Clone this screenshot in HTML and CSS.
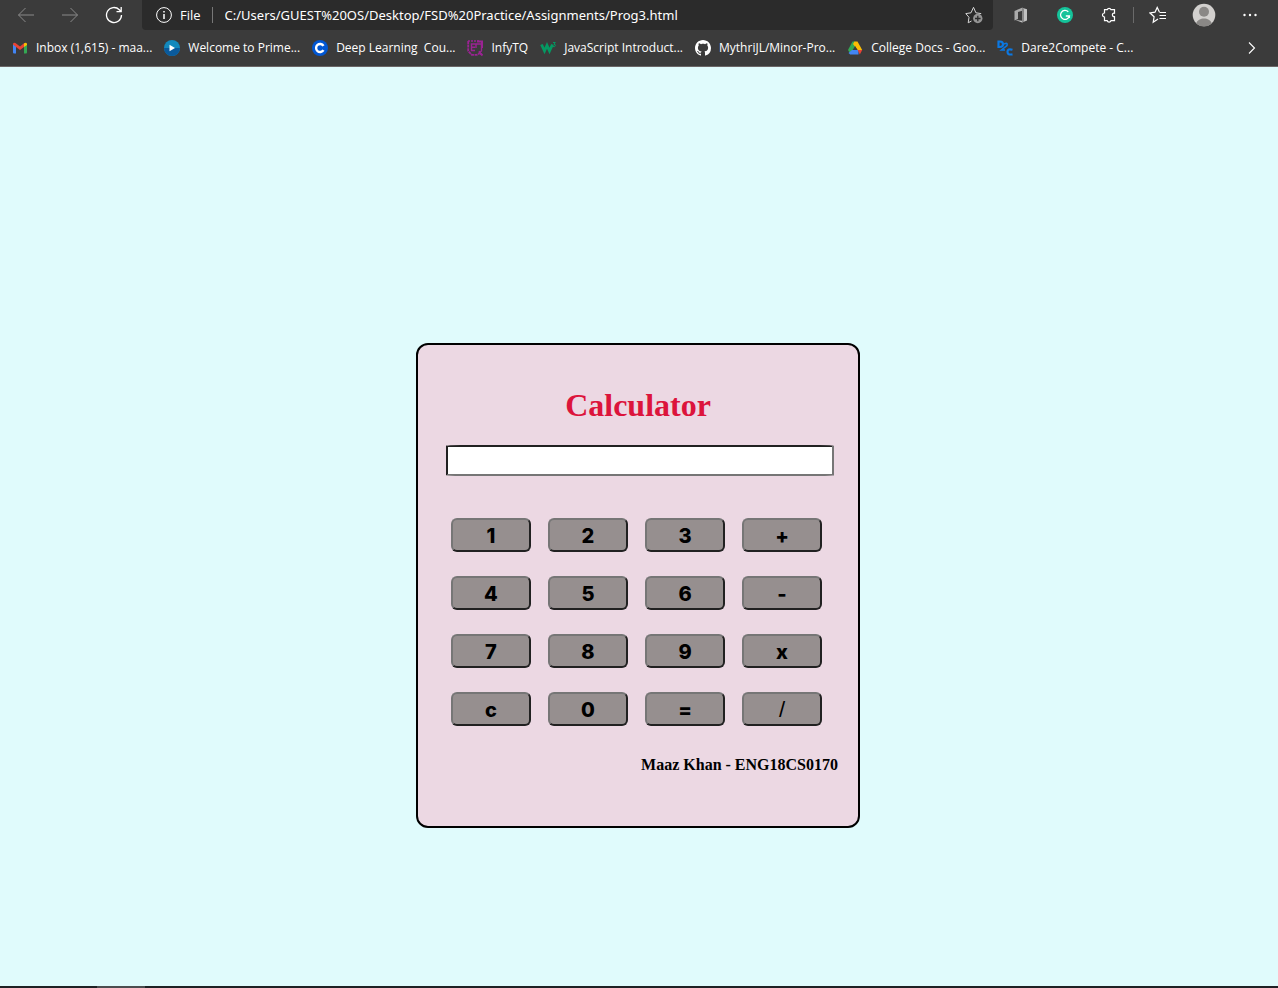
FILE: index.html
```html
<!DOCTYPE html>
<html lang="en">
<head>
<meta charset="utf-8">
<title>Calculator</title>
<link rel="stylesheet" href="styles.css">
</head>
<body>
<header class="browser">
  <div class="toolbar">
    <nav class="nav" aria-label="History">
      <button class="tool dim" aria-label="Back"><svg width="18" height="18" viewBox="0 0 18 18"><path d="M17 9H1.500M8.500 2L1.500 9l7 7"/></svg></button>
      <button class="tool dim" aria-label="Forward"><svg width="18" height="18" viewBox="0 0 18 18"><path d="M1 9h15.500M9.500 2l7 7-7 7"/></svg></button>
      <button class="tool" aria-label="Refresh"><svg width="18" height="18" viewBox="0 0 18 18"><path stroke-width="1.300" d="M16.500 9a7.500 7.500 0 1 1-2.200-5.300L16 5.500M16.200 1v4.700h-4.700"/></svg></button>
    </nav>
    <div class="address">
      <svg width="16" height="16" viewBox="0 0 16 16"><circle cx="8" cy="8" r="7.400"/><path stroke-width="1.500" d="M8 7v5M8 4v1.500"/></svg>
      <span class="scheme">File</span>
      <input class="url" aria-label="Address" value="C:/Users/GUEST%20OS/Desktop/FSD%20Practice/Assignments/Prog3.html">
      <button class="star" aria-label="Add to favorites"><svg width="18" height="18" viewBox="0 0 18 18"><path d="M6.500 15l-3.300 1.800.8-5.500L.8 7.600l5.200-.8L8.500 1.300l2.400 5.500 5.300.8"/><circle cx="12.800" cy="12.500" r="4.700" fill="#b0b0b0" stroke="none"/><path stroke="#2b2b2b" stroke-width="1.300" d="M10 12.500h5.600M12.800 9.700v5.600"/></svg></button>
    </div>
    <div class="actions">
      <button class="tool" aria-label="Office"><svg width="16" height="16" viewBox="0 0 16 16" stroke="none"><path fill="#aaa" d="M1.500 4L9 .7l1 .4v2.300L5 5v7l-3.500 1.500z"/><path fill="#c2c2c2" d="M9 .7l5 1.600v11.200l-5 1.900L2.500 13 9 13.700z"/><path fill="#888" d="M9 .7l2 .7v13.300l-2 .7z"/></svg></button>
      <button class="tool" aria-label="Grammarly"><svg width="16" height="16" viewBox="0 0 16 16" stroke="none"><circle cx="8" cy="8" r="8" fill="#15c39a"/><path fill="none" stroke="#fff" stroke-width="1.300" d="M11.300 4.800A4.500 4.500 0 1 0 12.400 9H8.800M12.400 8.300V11"/></svg></button>
      <button class="tool" aria-label="Extensions"><svg width="16" height="16" viewBox="0 0 16 16"><path stroke-width="1.200" d="M3.500 2.700h2.700a2 2 0 0 1 3.800 0h3.500v3.500c-2.800-.8-2.800 4 0 3.500v4H10a2 2 0 0 1-3.800 0H3.500V10a2 2 0 0 1 0-4z"/></svg></button>
      <span class="divider"></span>
      <button class="tool" aria-label="Favorites"><svg width="18" height="18" viewBox="0 0 18 18"><path stroke-width="1.200" d="M9 13l-4.800 3.300.9-5.500L1 7l5-.8 2.200-4.700L10.400 6M10.500 6.500H17M10.500 9.500H17M10.500 12.500H17"/></svg></button>
      <button class="tool profile" aria-label="Profile"><svg width="24" height="24" viewBox="0 0 24 24" stroke="none"><circle cx="12" cy="12" r="11.300" fill="#d2d0ce"/><circle cx="12" cy="8.800" r="5" fill="#8a8886"/><path fill="#8a8886" d="M4.200 20.400c2-6.500 13.600-6.500 15.600 0a11.500 11.500 0 0 1-15.600 0z"/></svg></button>
      <button class="tool" aria-label="Settings and more"><svg width="16" height="16" viewBox="0 0 16 16" fill="#fff" stroke="none"><circle cx="2.500" cy="8" r="1.200"/><circle cx="8" cy="8" r="1.200"/><circle cx="13.500" cy="8" r="1.200"/></svg></button>
    </div>
  </div>
  <nav class="bookmarks" aria-label="Favorites bar">
    <a href="#"><svg width="16" height="16" viewBox="0 0 16 16" stroke="none"><path fill="#4285f4" d="M1 4l3 2v7.500H2q-1 0-1-1z"/><path fill="#34a853" d="M12 6l3-2v8.500q0 1-1 1h-2z"/><path fill="#ea4335" d="M1 4.500V4q.5-2 2.400-1L8 6.400 12 3.300v3.800l-4 3-4-3z"/><path fill="#fbbc04" d="M12 3.300q2.500-1.500 3 .7v1L12 7.100z"/></svg><span>Inbox (1,615) - maa...</span></a>
    <a href="#"><svg width="16" height="16" viewBox="0 0 16 16" stroke="none"><circle cx="8" cy="8" r="8" fill="#1389bd"/><path fill="#0a5a9c" d="M0 8a8 8 0 0 0 16 0z"/><path fill="#fff" d="M5.500 4.800L11 8l-5.500 3.200z"/></svg><span>Welcome to Prime...</span></a>
    <a href="#"><svg width="16" height="16" viewBox="0 0 16 16" stroke="none"><circle cx="8" cy="8" r="8" fill="#0056d2"/><path fill="none" stroke="#fff" stroke-width="2.400" d="M11.500 5.900a4 4 0 1 0 0 4.200"/></svg><span>Deep Learning&nbsp; Cou...</span></a>
    <a href="#"><svg width="16" height="16" viewBox="0 0 16 16" stroke="#9b2393" stroke-width="1.400"><path stroke-dasharray="2 1" d="M1 1h12"/><path stroke-dasharray="3 .6" stroke-width="1.800" d="M1.200 1v10l3.600 3.800h5l3-1.500"/><path d="M8.500 4H4.500v6.500H8M4.500 7.200H8M8.500 4h6v7l-2 1.500M12 11l2.500 4M9 4v4" /><path stroke-width="2" d="M10 1.500h5V8M12 12l3.500 3.500"/></svg><span>InfyTQ</span></a>
    <a href="#"><svg width="16" height="16" viewBox="0 0 16 16" stroke="#059862"><path stroke-width="2.800" d="M1.500 4.500l3 6.500L7 5.500 9.500 11l3-6.500"/><path stroke-width="1" d="M13 2.500h2.300L14 4.300q1.700 0 1.300 1.500T13 6.500"/></svg><span>JavaScript Introduct...</span></a>
    <a href="#"><svg width="16" height="16" viewBox="0 0 16 16" fill="#fff" stroke="none"><path d="M8 0C3.580 0 0 3.580 0 8c0 3.540 2.290 6.530 5.470 7.590.4.070.55-.17.55-.38 0-.19-.01-.82-.01-1.490-2.010.37-2.530-.49-2.690-.94-.09-.23-.48-.94-.82-1.130-.28-.15-.68-.52-.01-.53.63-.01 1.080.58 1.230.82.72 1.210 1.870.87 2.330.66.070-.52.28-.87.51-1.070-1.780-.2-3.640-.89-3.640-3.950 0-.87.31-1.590.82-2.150-.08-.2-.36-1.020.08-2.120 0 0 .67-.21 2.200.82.64-.18 1.320-.27 2-.27s1.360.09 2 .27c1.530-1.040 2.200-.82 2.200-.82.44 1.100.16 1.920.08 2.120.51.56.82 1.270.82 2.150 0 3.070-1.870 3.750-3.650 3.950.29.25.54.73.54 1.480 0 1.070-.01 1.930-.01 2.200 0 .21.15.46.55.38A8.010 8.010 0 0 0 16 8c0-4.420-3.580-8-8-8z"/></svg><span>MythriJL/Minor-Pro...</span></a>
    <a href="#"><svg width="16" height="16" viewBox="0 0 16 16" stroke="none"><path fill="#34a853" d="M5.500 1.500H8l2 3.500-6.500 9L1 10z"/><path fill="#fbbc04" d="M7.500 1.500h3L15.200 10h-4.500L6 4z"/><path fill="#4285f4" d="M5 10h6.500v4.500H3.200L1.500 13z"/><path fill="#ea4335" d="M10.700 10h4.500l-2.400 4.500z"/><path fill="#3b3b3b" d="M8.100 6l2.300 4H5.700z"/></svg><span>College Docs - Goo...</span></a>
    <a href="#"><svg width="16" height="16" viewBox="0 0 16 16" stroke="#0b78e3" stroke-width="2.200"><path d="M1.500 1.500v5.500h1.500q3 0 3-2.700T3 1.500zM15.500 9.800q-5-1.500-5 2t5 2.500"/><path stroke-width="1.600" d="M7 4q4-2 3 1.500L4.500 10H8"/></svg><span>Dare2Compete - C...</span></a>
    <button class="tool more" aria-label="More favorites"><svg width="8" height="14" viewBox="0 0 8 14"><path stroke-width="1.100" d="M1 1.500L6.500 7 1 12.500"/></svg></button>
  </nav>
</header>
<main class="page">
  <form class="calculator">
    <h1>Calculator</h1>
    <input class="display" type="text" aria-label="Result">
    <div class="keys">
      <button type="button">1</button><button type="button">2</button><button type="button">3</button><button type="button">+</button>
      <button type="button">4</button><button type="button">5</button><button type="button">6</button><button type="button">-</button>
      <button type="button">7</button><button type="button">8</button><button type="button">9</button><button type="button">x</button>
      <button type="button">c</button><button type="button">0</button><button type="button">=</button><button type="button" class="thin">/</button>
    </div>
    <p class="author">Maaz Khan - ENG18CS0170</p>
  </form>
</main>
<footer class="taskbar"><span class="task"></span></footer>
</body>
</html>
```
FILE: styles.css
```css
* { box-sizing: border-box; }
body {
  margin: 0;
  min-height: 100vh;
  display: flex;
  flex-direction: column;
  background: #e0fbfc;
  font-family: "Liberation Serif", "Times New Roman", serif;
}
button, input { font: inherit; }
svg { display: block; flex: none; }
.browser {
  background: #3b3b3b;
  border-bottom: 1px solid #6b6666;
  color: #fff;
  font: 12px/16px "Segoe UI", "Open Sans", "Noto Sans", sans-serif;
}
.browser svg:not([fill]) { fill: none; }
.browser svg:not([stroke]) { stroke: #fff; }
.toolbar { display: flex; height: 30px; }
.nav { display: flex; width: 142px; padding-left: 4px; }
.tool {
  display: flex;
  align-items: center;
  justify-content: center;
  width: 44px;
  padding: 0;
  border: 0;
  background: none;
}
.dim { opacity: 0.4; }
.address {
  flex: 1;
  display: flex;
  align-items: center;
  padding: 0 10px 0 14px;
  background: #2b2b2b;
  border-radius: 0 0 4px 4px;
  font-size: 13px;
}
.scheme { margin-left: 8px; padding-right: 11px; border-right: 1px solid #777; }
.url {
  flex: 1;
  min-width: 0;
  padding: 0 0 0 12px;
  border: 0;
  background: none;
  color: #fff;
  font-family: "Segoe UI", "Noto Sans", sans-serif;
}
.star { padding: 0; border: 0; background: none; }
.star svg { opacity: 0.8; }
.actions { display: flex; align-items: center; width: 285px; padding-left: 6px; }
.actions .tool { height: 30px; }
.divider { width: 1px; height: 16px; margin: 0 2px; background: #6a6a6a; }
.actions .profile { width: 48px; }
.bookmarks {
  display: flex;
  align-items: center;
  gap: 12px;
  height: 36px;
  padding: 0 8px 0 12px;
}
.bookmarks a {
  display: flex;
  align-items: center;
  gap: 8px;
  color: #fff;
  text-decoration: none;
  white-space: nowrap;
}
.more { width: 36px; height: 30px; margin-left: auto; }
.page {
  flex: 1;
  display: flex;
  justify-content: center;
  align-items: flex-start;
  padding: 276px 2px 0 0;
}
.calculator {
  width: 444px;
  padding: 41px 20px 51px 28px;
  background: #ecd8e3;
  border: 2px solid #000;
  border-radius: 12px;
}
h1 {
  margin: 0 0 21px;
  padding-right: 8px;
  color: crimson;
  font-size: 32px;
  line-height: 38px;
  text-align: center;
}
.display {
  display: block;
  width: 388px;
  height: 31px;
  border: 2px inset #767676;
  border-radius: 15px / 1px;
  background: #fff;
}
.keys {
  display: grid;
  grid-template-columns: repeat(4, 80px);
  gap: 24px 17px;
  margin: 42px 0 0 5px;
}
.keys button {
  height: 34px;
  padding: 2px 0 0;
  border: 2px outset #767676;
  border-radius: 6px;
  background: #968f8f;
  color: #000;
  font: 800 20px/28px "Arial Black", Inter, sans-serif;
}
.keys .thin { font: 22px/28px Arial, "Liberation Sans", sans-serif; }
.author {
  margin: 29px 0 0;
  font-size: 16px;
  font-weight: bold;
  line-height: 20px;
  text-align: right;
}
.taskbar { height: 2px; padding-left: 97px; background: #1e2124; }
.task { display: block; width: 48px; height: 2px; background: #4b4d4f; }
```
